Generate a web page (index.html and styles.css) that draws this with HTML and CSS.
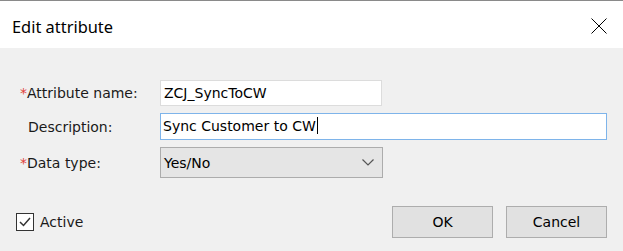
FILE: index.html
```html
<!DOCTYPE html>
<html>
<head>
<meta charset="utf-8">
<link rel="stylesheet" href="styles.css">
</head>
<body>
<div class="dialog">
  <div class="titlebar">
    <span class="title">Edit attribute</span>
    <svg class="close" width="16" height="16" viewBox="0 0 16 16"><path d="M0.5 0.5 L15.5 15.5 M15.5 0.5 L0.5 15.5" stroke="#000" stroke-width="1" fill="none"/></svg>
  </div>
  <div class="body">
    <div class="form">
      <label class="lbl"><span class="req">*</span>Attribute name:</label>
      <div class="field f1">ZCJ_SyncToCW</div>
      <label class="lbl plain">Description:</label>
      <div class="field f2 focus">Sync Customer to CW<span class="caret"></span></div>
      <label class="lbl"><span class="req">*</span>Data type:</label>
      <div class="select"><span>Yes/No</span>
        <svg width="12" height="7" viewBox="0 0 12 7"><path d="M0.5 0.5 L6 6 L11.5 0.5" stroke="#555" stroke-width="1.2" fill="none"/></svg>
      </div>
    </div>
    <div class="footer">
      <div class="check">
        <span class="box"><svg width="14" height="14" viewBox="0 0 14 14"><path d="M2 7 L5.5 10.5 L12 3" stroke="#333" stroke-width="1.5" fill="none"/></svg></span>
        <span>Active</span>
      </div>
      <div class="buttons">
        <button class="btn">OK</button>
        <button class="btn">Cancel</button>
      </div>
    </div>
  </div>
</div>
</body>
</html>
```
FILE: styles.css
```css
html, body { margin: 0; padding: 0; }
body {
  width: 623px; height: 251px; overflow: hidden;
  background: #f0f0f0;
  font-family: "DejaVu Sans", Verdana, sans-serif;
}
.dialog { border-top: 1px solid #8a8a8a; }
.titlebar {
  height: 47px; background: #fff;
  display: flex; align-items: center; justify-content: space-between;
  padding: 0 16px 0 12px;
}
.title { font-family: "Noto Sans", sans-serif; font-size: 16.4px; color: #000; margin-top: 3px; }
.close { margin-top: 3px; }
.body { padding: 32px 16px 0 20px; }
.form {
  display: grid; grid-template-columns: 140px auto; row-gap: 7px;
  justify-items: start; align-items: center;
  font-size: 14px; color: #1a1a1a;
}
.lbl { display: block; }
.lbl.plain { padding-left: 8px; }
.req { color: #e0403a; }
.field {
  box-sizing: border-box; height: 26px; background: #fff;
  border: 1px solid #dcdcdc; padding: 0 3px; line-height: 24px; color: #000;
}
.f1 { width: 222px; }
.f2 { width: 447px; height: 27px; border-color: #7eb4ea; padding-left: 2px; }
.caret { display: inline-block; width: 1px; height: 17px; background: #000; vertical-align: -3px; margin-left: 1px; }
.select {
  box-sizing: border-box; width: 223px; height: 31px;
  background: #e5e5e5; border: 1px solid #acacac;
  display: flex; align-items: center; justify-content: space-between;
  padding: 0 8px 0 3px; color: #000;
}
.footer {
  display: flex; justify-content: space-between; align-items: center;
  margin-top: 28px; font-size: 14px;
}
.check { display: flex; align-items: center; gap: 6px; margin-left: -4px; margin-top: 0; color: #1a1a1a; }
.box {
  box-sizing: border-box; width: 18px; height: 18px; border: 1px solid #333; background: #fff;
  display: flex; align-items: center; justify-content: center;
}
.buttons { display: flex; gap: 13px; }
.btn {
  box-sizing: border-box; width: 101px; height: 32px;
  background: #e1e1e1; border: 1px solid #adadad; border-radius: 0;
  font-family: "DejaVu Sans", Verdana, sans-serif; font-size: 14px; color: #000;
  padding: 0;
}
```
